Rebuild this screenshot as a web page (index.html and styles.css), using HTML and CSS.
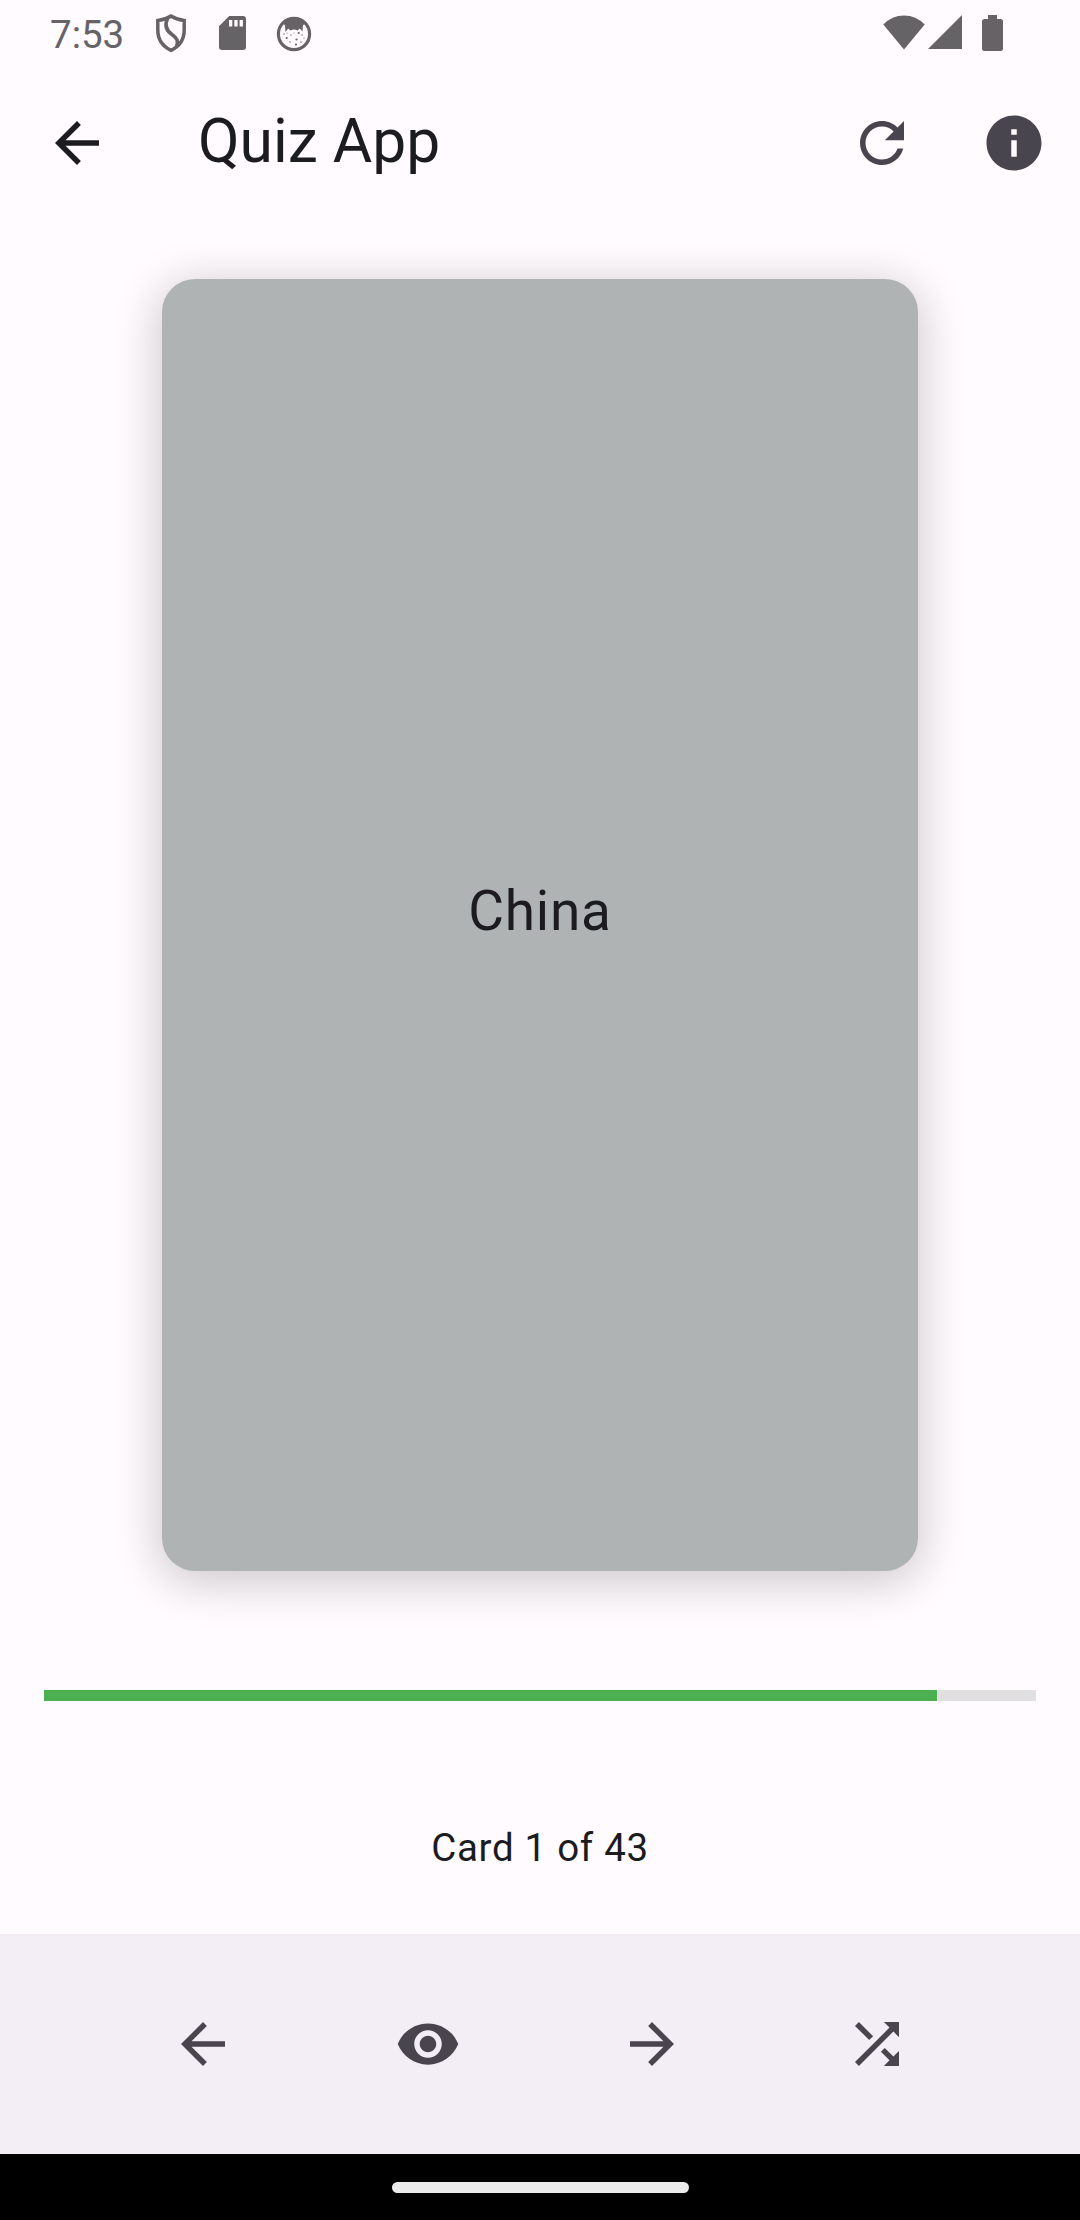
FILE: index.html
```html
<!DOCTYPE html>
<html lang="en">
<head>
<meta charset="utf-8">
<title>Quiz App</title>
<link rel="stylesheet" href="styles.css">
</head>
<body>
<div class="screen">
  <div class="status">
    <span class="clock">7:53</span>
    <svg class="st-shield" width="34" height="40" viewBox="0 0 34 40"><path d="M17 3Q10.500 7 3.800 7.500V17C3.800 27 9 33.500 17 37.300C25 33.500 30.200 27 30.200 17V7.500Q23.500 7 17 3Z" fill="none" stroke="currentColor" stroke-width="3.500"/><path d="M14 4.500C9.500 13 13 18 18 21.500C23.500 25.500 24.500 28 22.500 33" fill="none" stroke="currentColor" stroke-width="3.600"/></svg>
    <svg class="st-sd" width="27" height="34" viewBox="0 0 27 34"><path fill="currentColor" fill-rule="evenodd" d="M10.200 0H24Q27 0 27 3V31Q27 34 24 34H3Q0 34 0 31V10.200ZM10 4V10.500H13.300V4ZM15.300 4V10.500H18.600V4ZM20.600 4V10.500H23.900V4Z"/></svg>
    <svg class="st-face" width="36" height="36" viewBox="0 0 36 36"><circle cx="18" cy="18" r="15.600" fill="none" stroke="currentColor" stroke-width="3.200"/><path fill="currentColor" d="M7 7Q18-3 29 7L27 9.500L26.500 15.500L23.800 12.500L21.500 14.500Q18 12.500 14.500 14.500L12.200 12.500L9.500 16L9 9.500Z"/><g fill="currentColor"><circle cx="8" cy="18" r=".7"/><circle cx="10.700" cy="22" r="1.100"/><circle cx="15" cy="19" r=".7"/><circle cx="22.700" cy="17" r="1.100"/><circle cx="26" cy="19" r=".7"/><circle cx="20.500" cy="23.500" r="1.100"/><circle cx="28" cy="22" r=".6"/><circle cx="14" cy="26" r=".7"/><circle cx="20" cy="28.500" r="1.100"/><circle cx="25" cy="26" r=".7"/><circle cx="11" cy="17" r=".5"/><circle cx="18" cy="17" r=".5"/></g></svg>
    <svg class="st-wifi" width="42" height="35" viewBox="0 0 42 35"><path fill="currentColor" d="M21 34.500L.3 9.500Q9 .5 21 .5T41.700 9.500Z"/></svg>
    <svg class="st-signal" width="34" height="34" viewBox="0 0 34 34"><path fill="currentColor" d="M34 0V34H0Z"/></svg>
    <svg class="st-battery" width="21" height="36" viewBox="0 0 21 36"><path fill="currentColor" d="M6 0H15V4H18.500Q21 4 21 6.500V33.500Q21 36 18.500 36H2.500Q0 36 0 33.500V6.500Q0 4 2.500 4H6Z"/></svg>
  </div>
  <header class="appbar">
    <svg class="icon dark" viewBox="0 0 24 24"><path d="M20 11H7.830l5.590-5.590L12 4l-8 8 8 8 1.410-1.410L7.830 13H20v-2z"/></svg>
    <h1 class="title">Quiz App</h1>
    <div class="actions">
      <svg class="icon" viewBox="0 0 24 24"><path d="M17.650 6.350C16.200 4.900 14.210 4 12 4c-4.420 0-7.990 3.580-7.990 8s3.570 8 7.990 8c3.730 0 6.840-2.550 7.730-6h-2.080c-.82 2.330-3.040 4-5.650 4-3.310 0-6-2.690-6-6s2.690-6 6-6c1.660 0 3.140.69 4.220 1.780L13 11h7V4l-2.350 2.350z"/></svg>
      <svg class="icon" viewBox="0 0 24 24"><path d="M12 2C6.480 2 2 6.480 2 12s4.480 10 10 10 10-4.480 10-10S17.520 2 12 2zm1 15h-2v-6h2v6zm0-8h-2V7h2v2z"/></svg>
    </div>
  </header>
  <main class="content">
    <div class="card">China</div>
    <div class="progress"><div class="progress-value" style="width:90%"></div></div>
    <div class="counter">Card 1 of 43</div>
  </main>
  <nav class="toolbar">
    <svg class="icon" viewBox="0 0 24 24"><path d="M20 11H7.830l5.590-5.590L12 4l-8 8 8 8 1.410-1.410L7.830 13H20v-2z"/></svg>
    <svg class="icon" viewBox="0 0 24 24"><path d="M12 4.500C7 4.500 2.730 7.610 1 12c1.730 4.390 6 7.500 11 7.500s9.270-3.110 11-7.500c-1.730-4.390-6-7.500-11-7.500zM12 17c-2.760 0-5-2.240-5-5s2.240-5 5-5 5 2.240 5 5-2.240 5-5 5zm0-8c-1.660 0-3 1.340-3 3s1.340 3 3 3 3-1.340 3-3-1.340-3-3-3z"/></svg>
    <svg class="icon" viewBox="0 0 24 24"><path d="M12 4l-1.410 1.410L16.170 11H4v2h12.170l-5.580 5.590L12 20l8-8z"/></svg>
    <svg class="icon" viewBox="0 0 24 24"><path d="M10.590 9.170L5.410 4 4 5.410l5.170 5.170 1.420-1.410zM14.500 4l2.040 2.040L4 18.590 5.410 20 17.960 7.460 20 9.500V4h-5.500zm.33 9.410l-1.410 1.410 3.130 3.130L14.500 20H20v-5.500l-2.040 2.040-3.130-3.130z"/></svg>
  </nav>
  <div class="gesture"><div class="pill"></div></div>
</div>
</body>
</html>
```
FILE: styles.css
```css
* {
  box-sizing: border-box;
}

body {
  margin: 0;
  background: #fffbff;
  color: #1c1b1f;
  font-family: Roboto, sans-serif;
}

.screen {
  display: flex;
  flex-direction: column;
  width: 1080px;
  height: 2220px;
}

svg {
  display: block;
  flex: none;
}

.status {
  display: flex;
  align-items: flex-start;
  height: 66px;
  padding-left: 50px;
  color: #666367;
}

.clock {
  width: 104px;
  padding-top: 12px;
  font-size: 38.5px;
  line-height: 45px;
}

.st-shield { margin-top: 13px; }
.st-sd { margin: 16px 0 0 31px; }
.st-face { margin: 15.5px 0 0 29.500px; }
.st-wifi { margin: 15px 0 0 571.500px; }
.st-signal { margin: 15px 0 0 3px; }
.st-battery { margin: 15px 0 0 20px; }

.icon {
  width: 132px;
  height: 132px;
  padding: 33px;
  fill: #49454f;
}

.icon.dark {
  fill: #1c1b1f;
}

.appbar {
  display: flex;
  align-items: center;
  height: 154px;
  padding-left: 11px;
}

.title {
  margin: 0 0 4px 55px;
  font-size: 60.5px;
  font-weight: 400;
  line-height: 77px;
}

.actions {
  display: flex;
  margin-left: auto;
}

.content {
  display: flex;
  flex-direction: column;
  align-items: center;
  height: 1714px;
  padding: 59px 44px 0;
}

.card {
  display: flex;
  align-items: center;
  justify-content: center;
  width: 756px;
  height: 1292px;
  padding-bottom: 28px;
  border-radius: 33px;
  background: #afb3b4;
  box-shadow: 0 8px 46px 4px rgba(0, 0, 0, 0.2);
  font-size: 55px;
  letter-spacing: 0.7px;
}

.progress {
  width: 100%;
  height: 11px;
  margin-top: 119px;
  background: #e0e0e0;
}

.progress-value {
  height: 100%;
  background: #4caf50;
}

.counter {
  margin-top: 119px;
  font-size: 38.5px;
  line-height: 55px;
  letter-spacing: 0.7px;
}

.toolbar {
  display: flex;
  align-items: center;
  justify-content: space-evenly;
  height: 220px;
  padding: 0 44px;
  background: #f3eef5;
}

.gesture {
  display: flex;
  align-items: center;
  justify-content: center;
  height: 66px;
  background: #000;
}

.pill {
  width: 297px;
  height: 11px;
  border-radius: 6px;
  background: #ebebeb;
}
```
